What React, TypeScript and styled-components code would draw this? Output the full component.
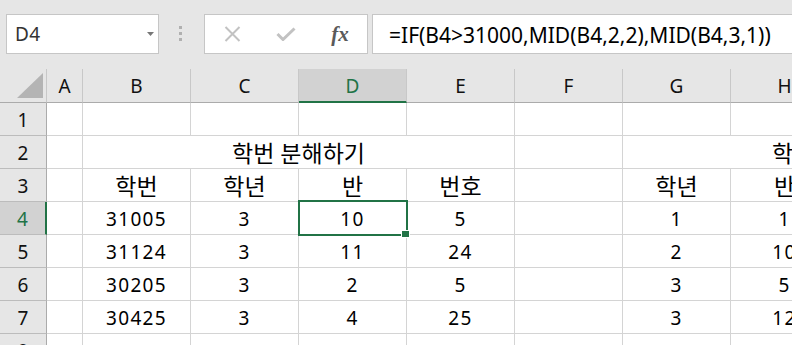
import React from 'react';
import styled, { createGlobalStyle } from 'styled-components';

type CellData = { v?: string; span?: number };

const COLS = ['A', 'B', 'C', 'D', 'E', 'F', 'G', 'H', 'I', 'J'];
const ACTIVE_COL = 'D';
const ACTIVE_ROW = 4;

const e = (n: number): CellData[] => Array.from({ length: n }, () => ({}));
const row = (...vals: string[]): CellData[] => vals.map((v) => ({ v }));

const ROWS: CellData[][] = [
  e(10),
  [{}, { v: '학번 분해하기', span: 4 }, {}, { v: '학번 분해하기', span: 4 }],
  row('', '학번', '학년', '반', '번호', '', '학년', '반', '번호', ''),
  row('', '31005', '3', '10', '5', '', '1', '1', '5', ''),
  row('', '31124', '3', '11', '24', '', '2', '10', '24', ''),
  row('', '30205', '3', '2', '5', '', '3', '5', '5', ''),
  row('', '30425', '3', '4', '25', '', '3', '12', '25', ''),
  e(10),
];

const hasHangul = (s?: string) => !!s && /[\uac00-\ud7a3]/.test(s);

const App: React.FC = () => {
  return (
    <Page>
      <GlobalStyle />
      <Bar>
        <NameBox>
          D4
          <Caret width="7" height="4" viewBox="0 0 7 4">
            <polygon points="0,0 7,0 3.5,4" fill="#777" />
          </Caret>
        </NameBox>
        <Grip>
          <i />
          <i />
          <i />
        </Grip>
        <ButtonBox>
          <ToolSlot>
            <svg width="17" height="16" viewBox="0 0 17 16">
              <path d="M1.5 1 L15.5 15 M15.5 1 L1.5 15" stroke="#c2c2c2" strokeWidth="2" fill="none" />
            </svg>
          </ToolSlot>
          <ToolSlot>
            <svg width="20" height="14" viewBox="0 0 20 14">
              <path d="M1.5 7 L7 12.5 L18.5 1.5" stroke="#c2c2c2" strokeWidth="3" fill="none" />
            </svg>
          </ToolSlot>
          <ToolSlot>
            <Fx>fx</Fx>
          </ToolSlot>
        </ButtonBox>
        <FormulaBox>=IF(B4&gt;31000,MID(B4,2,2),MID(B4,3,1))</FormulaBox>
      </Bar>
      <Sheet>
        <Corner>
          <svg width="47" height="34" viewBox="0 0 47 34">
            <polygon points="17,29 43,29 43,4" fill="#b4b4b4" />
          </svg>
        </Corner>
        {COLS.map((c) => (
          <ColHead key={c} $active={c === ACTIVE_COL}>
            {c}
          </ColHead>
        ))}
        {ROWS.map((cells, ri) => {
          const r = ri + 1;
          let col = 0;
          return (
            <React.Fragment key={r}>
              <RowHead $active={r === ACTIVE_ROW}>{r}</RowHead>
              {cells.map((cell, ci) => {
                const letter = COLS[col];
                col += cell.span ?? 1;
                const selected = r === ACTIVE_ROW && letter === ACTIVE_COL;
                return (
                  <Cell key={ci} $span={cell.span ?? 1} $kr={hasHangul(cell.v)} $selected={selected}>
                    {cell.v}
                    {selected && (
                      <>
                        <Selection />
                        <Handle />
                      </>
                    )}
                  </Cell>
                );
              })}
            </React.Fragment>
          );
        })}
      </Sheet>
    </Page>
  );
};

const GlobalStyle = createGlobalStyle`
  html, body {
    margin: 0;
    padding: 0;
    background: #e6e6e6;
  }
  body {
    font-family: "Noto Sans", "Noto Sans CJK KR", sans-serif;
    overflow: hidden;
  }
`;

const Page = styled.div`
  width: 792px;
  height: 345px;
  overflow: hidden;
  background: #e6e6e6;
`;

const Bar = styled.div`
  height: 69px;
  box-sizing: border-box;
  padding: 14px 0 0 6px;
  display: flex;
  align-items: flex-start;
`;

const NameBox = styled.div`
  width: 153px;
  height: 40px;
  box-sizing: border-box;
  flex: none;
  background: #fff;
  border: 1px solid #c6c6c6;
  display: flex;
  align-items: center;
  padding: 0 4px 0 8px;
  font-size: 19px;
  letter-spacing: 0.5px;
  color: #333;
`;

const Caret = styled.svg`
  margin-left: auto;
`;

const Grip = styled.div`
  flex: none;
  margin: 12px 0 0 20px;
  display: flex;
  flex-direction: column;
  gap: 3px;

  i {
    width: 3px;
    height: 3px;
    background: #b0b0b0;
  }
`;

const ButtonBox = styled.div`
  flex: none;
  width: 164px;
  height: 40px;
  box-sizing: border-box;
  margin-left: 22px;
  background: #fff;
  border: 1px solid #c6c6c6;
  display: flex;
  align-items: center;
`;

const ToolSlot = styled.div`
  flex: 1;
  display: flex;
  align-items: center;
  justify-content: center;
`;

const Fx = styled.span`
  font-family: "Liberation Serif", serif;
  font-style: italic;
  font-weight: bold;
  font-size: 21px;
  color: #5a5a5a;
  line-height: 1;
`;

const FormulaBox = styled.div`
  flex: none;
  width: 600px;
  height: 40px;
  box-sizing: border-box;
  margin-left: 4px;
  background: #fff;
  border: 1px solid #c6c6c6;
  display: flex;
  align-items: center;
  padding: 1px 0 0 16px;
  font-size: 21px;
  color: #000;
  white-space: nowrap;
`;

const Sheet = styled.div`
  display: grid;
  grid-template-columns: 47px 36px repeat(9, 108px);
  grid-template-rows: 34px;
  grid-auto-rows: 33px;
  width: max-content;
  background: #fff;
  font-size: 19px;
  color: #000;
`;

const Corner = styled.div`
  background: #e6e6e6;
  border-right: 1px solid #c8c8c8;
  border-bottom: 1px solid #ababab;
  box-sizing: border-box;
  svg {
    display: block;
  }
`;

const ColHead = styled.div<{ $active: boolean }>`
  box-sizing: border-box;
  display: flex;
  align-items: center;
  justify-content: center;
  background: ${(p) => (p.$active ? '#d2d2d2' : '#e6e6e6')};
  color: ${(p) => (p.$active ? '#217346' : '#111')};
  border-right: 1px solid #c8c8c8;
  border-bottom: ${(p) => (p.$active ? '2px solid #217346' : '1px solid #ababab')};
  padding-top: 1px;
`;

const RowHead = styled.div<{ $active: boolean }>`
  box-sizing: border-box;
  display: flex;
  align-items: center;
  justify-content: center;
  background: ${(p) => (p.$active ? '#d2d2d2' : '#e6e6e6')};
  color: ${(p) => (p.$active ? '#217346' : '#111')};
  border-right: ${(p) => (p.$active ? '2px solid #217346' : '1px solid #ababab')};
  border-bottom: 1px solid #bcbcbc;
  padding-top: 1px;
`;

const Cell = styled.div<{ $span: number; $kr: boolean; $selected: boolean }>`
  grid-column: span ${(p) => p.$span};
  box-sizing: border-box;
  display: flex;
  align-items: center;
  justify-content: center;
  border-right: 1px solid #d4d4d4;
  border-bottom: 1px solid #d4d4d4;
  font-size: ${(p) => (p.$kr ? '23px' : '19px')};
  letter-spacing: ${(p) => (p.$kr ? '0' : '1.3px')};
  padding-top: ${(p) => (p.$kr ? '0' : '1px')};
  white-space: nowrap;
  position: ${(p) => (p.$selected ? 'relative' : 'static')};
`;

const Selection = styled.div`
  position: absolute;
  left: -1px;
  top: -2px;
  width: 110px;
  height: 36px;
  box-sizing: border-box;
  border: 2px solid #217346;
  z-index: 2;
`;

const Handle = styled.div`
  position: absolute;
  left: 103px;
  top: 29px;
  width: 7px;
  height: 6px;
  background: #217346;
  box-shadow: 0 0 0 1px #fff;
  z-index: 3;
`;

export default App;
